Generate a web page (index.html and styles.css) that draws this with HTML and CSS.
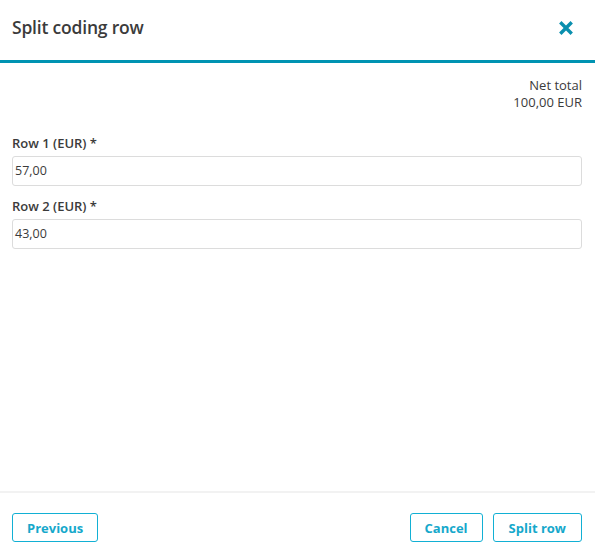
FILE: index.html
```html
<!DOCTYPE html>
<html>
<head>
<meta charset="utf-8">
<link rel="stylesheet" href="styles.css">
</head>
<body>
<div class="dialog">
  <header class="header">
    <h1 class="title">Split coding row</h1>
    <button class="close" aria-label="Close">
      <svg width="14" height="14" viewBox="0 0 14 14"><path d="M2.5 2.5 L11.5 11.5 M11.5 2.5 L2.5 11.5" stroke="#0a8fae" stroke-width="3.4" stroke-linecap="square"/></svg>
    </button>
  </header>
  <main class="body">
    <div class="total">
      <div class="total-line">Net total</div>
      <div class="total-line">100,00 EUR</div>
    </div>
    <div class="field">
      <label class="label">Row 1 (EUR) *</label>
      <div class="input">57,00</div>
    </div>
    <div class="field">
      <label class="label">Row 2 (EUR) *</label>
      <div class="input">43,00</div>
    </div>
  </main>
  <footer class="footer">
    <button class="btn">Previous</button>
    <div class="right">
      <button class="btn">Cancel</button>
      <button class="btn btn-wide">Split row</button>
    </div>
  </footer>
</div>
</body>
</html>
```
FILE: styles.css
```css
* { box-sizing: border-box; }
html, body { margin: 0; padding: 0; background: #fff; }
body { font-family: "Open Sans", "Noto Sans", sans-serif; color: #3b3b3b; }
.dialog { width: 595px; height: 548px; display: flex; flex-direction: column; }
.header { height: 63px; border-bottom: 3px solid #0093b2; display: flex; align-items: flex-start; justify-content: space-between; padding: 15px 22px 0 12px; }
.title { margin: 0; font-size: 17.5px; line-height: 24px; font-weight: 600; color: #3b3b3b; letter-spacing: -0.2px; }
.close { border: 0; background: none; padding: 0; width: 14px; height: 14px; display: flex; margin-top: 6px; }
.body { flex: 1; padding: 14px 13px 0 12px; }
.total { text-align: right; font-size: 13px; line-height: 17px; color: #3b3b3b; }
.field { margin-top: 23px; }
.field + .field { margin-top: 11px; }
.label { display: block; font-size: 13px; font-weight: 600; line-height: 18px; margin-bottom: 4px; }
.input { height: 30px; border: 1px solid #dcdcdc; border-radius: 3px; padding: 0 2px; font-size: 12.5px; line-height: 28px; }
.footer { border-top: 2px solid #f2f2f2; height: 57px; display: flex; justify-content: space-between; align-items: flex-start; padding: 20px 13px 0 12px; }
.right { display: flex; gap: 10px; }
.btn { height: 29px; border: 1px solid #12b0d4; border-radius: 3px; background: #fff; color: #16a8cb; font-family: inherit; font-size: 13px; font-weight: 700; padding: 0 14px; }
.btn-wide { padding: 0 15px; }
```
